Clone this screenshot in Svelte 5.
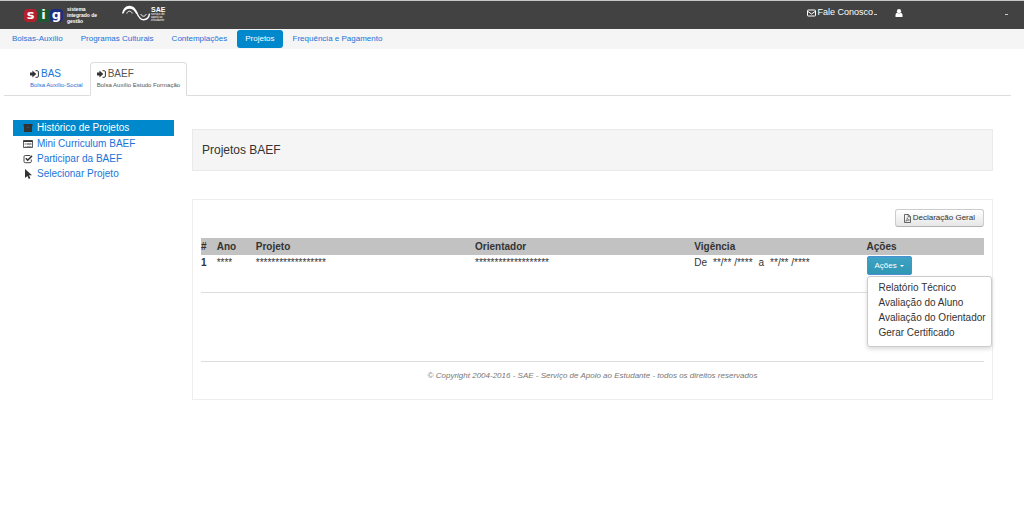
<script lang="ts">
	type Project = {
		id: number;
		year: string;
		title: string;
		advisor: string;
		start: string;
		end: string;
	};

	const sections = [
		'Bolsas-Auxílio',
		'Programas Culturais',
		'Contemplações',
		'Projetos',
		'Frequência e Pagamento'
	];

	const tabs = [
		{ name: 'BAS', detail: 'Bolsa Auxílio-Social' },
		{ name: 'BAEF', detail: 'Bolsa Auxílio Estudo Formação' }
	];

	const sideItems = [
		{ icon: 'archive', label: 'Histórico de Projetos' },
		{ icon: 'list', label: 'Mini Curriculum BAEF' },
		{ icon: 'check', label: 'Participar da BAEF' },
		{ icon: 'pointer', label: 'Selecionar Projeto' }
	];

	const projects: Project[] = [
		{
			id: 1,
			year: '****',
			title: '******************',
			advisor: '*******************',
			start: '**/** /****',
			end: '**/** /****'
		}
	];

	const actions = [
		'Relatório Técnico',
		'Avaliação do Aluno',
		'Avaliação do Orientador',
		'Gerar Certificado'
	];

	let section = $state('Projetos');
	let tab = $state('BAEF');
	let sideItem = $state('Histórico de Projetos');
	let openMenu = $state<number | null>(1);

	function toggleMenu(id: number) {
		openMenu = openMenu === id ? null : id;
	}
</script>

<svelte:head>
	<title>Projetos BAEF</title>
</svelte:head>

<header class="topbar">
	<a class="logo" href="#sig" aria-label="sig">
		<span class="sig">
			<span class="letter red">s</span>
			<span class="letter green">i</span>
			<span class="letter blue">g</span>
		</span>
		<span class="tagline">sistema<br />integrado de<br />gestão</span>
	</a>
	<a class="logo sae" href="#sae">
		<svg width="29" height="17" viewBox="0 0 29 17" fill="none" stroke="#fff">
			<path d="M0 8.500C1 3.500 4 .8 7.500.8c4.500 0 6.500 3.700 8.300 7.200L14.300 9C12.300 5.500 10.500 3.800 7.500 3.800 4.500 3.800 2.500 5.500 1.500 8.500z" fill="#fff" stroke="none" />
			<path d="M4.800 8.500c.5-1.600 1.400-2.300 2.700-2.300s2.200.7 2.700 2.300" />
			<path d="M14.800 8c1.700 3.800 3.200 6.700 6.700 6.700 3.300 0 5.500-2.200 6-6" stroke-width="1.400" />
			<path d="M18.800 9c.5 1.500 1.400 2.200 2.700 2.200s2.200-.7 2.700-2.200" stroke-width=".9" />
		</svg>
		<span class="sae-text"><b>SAE</b>serviço de<br />apoio ao<br />estudante</span>
	</a>
	<div class="account">
		<button class="bar-button" type="button">
			<svg width="9" height="8" viewBox="0 0 9 8" fill="none" stroke="#fff">
				<rect x=".5" y="1" width="8" height="6" rx=".6" />
				<path d="M1 2.500l3.500 2.500L8 2.500" />
			</svg>
			Fale Conosco
			<span class="dash"></span>
		</button>
		<button class="bar-button user" type="button" aria-label="Usuário">
			<svg width="8" height="8" viewBox="0 0 8 8" fill="#fff">
				<circle cx="4" cy="2.200" r="2.100" />
				<path d="M.5 8V6.300C.5 4.800 1.300 4 2.300 3.800c1 .8 2.400.8 3.400 0 1 .2 1.800 1 1.800 2.500V8z" />
			</svg>
			<span class="dash"></span>
		</button>
	</div>
</header>

<nav class="sections">
	{#each sections as name}
		<a href="#{name}" class:active={section === name} onclick={() => (section = name)}>{name}</a>
	{/each}
</nav>

<nav class="tabs">
	{#each tabs as item}
		<a href="#{item.name}" class:active={tab === item.name} onclick={() => (tab = item.name)}>
			<span class="tab-name">
				<svg width="9" height="8" viewBox="0 0 9 8">
					<path d="M0 2.500h2.400V.4L6.300 4 2.400 7.600V5.500H0z" fill="#333" />
					<path d="M5.500.7h1.700c.8 0 1.200.4 1.200 1.200v4.200c0 .8-.4 1.200-1.200 1.200H5.500" fill="none" stroke="#333" stroke-width="1" />
				</svg>
				{item.name}
			</span>
			<small>{item.detail}</small>
		</a>
	{/each}
</nav>

<div class="layout">
	<nav class="side">
		{#each sideItems as item}
			<a href="#{item.icon}" class:active={sideItem === item.label} onclick={() => (sideItem = item.label)}>
				<svg width="10" height="10" viewBox="0 0 10 10" fill="#333">
					{#if item.icon === 'archive'}
						<path d="M.5 1h9v2.300h-9zM1 3.300h8V9H1z" />
						<path d="M3.800 4.500h2.400" stroke="#2a6a8c" stroke-width=".6" />
					{:else if item.icon === 'list'}
						<path d="M.5 1.500h9v7h-9z" fill="none" stroke="#333" stroke-width=".8" />
						<path d="M.5 1.500h9v1.500h-9zM1.700 4h1v.6h-1zM3.500 4h5v.6h-5zM1.700 5.500h1v.6h-1zM3.500 5.500h5v.6h-5zM1.700 7h1v.6h-1zM3.500 7h5v.6h-5z" />
					{:else if item.icon === 'check'}
						<path d="M8.300 5.500v2c0 .7-.5 1.200-1.200 1.200H2.200C1.500 8.700 1 8.200 1 7.500V2.700c0-.7.500-1.200 1.200-1.200h5" fill="none" stroke="#333" stroke-width=".9" />
						<path d="M2.800 4.200L4.700 6.200 9 1.900" fill="none" stroke="#333" stroke-width="1.500" />
					{:else}
						<path d="M2 0l7 6.300H6l1.400 3-1.600.7L4.400 7 2 9z" />
					{/if}
				</svg>
				{item.label}
			</a>
		{/each}
	</nav>

	<main>
		<h1>Projetos BAEF</h1>

		<section class="panel">
			<div class="toolbar">
				<button class="report" type="button">
					<svg width="7" height="9" viewBox="0 0 7 9" fill="none" stroke="#444" stroke-width=".8">
						<path d="M.5.5h3.800l2.200 2.200v5.800h-6zM4.200.5v2.300h2.300" />
						<path d="M1.700 7.200C3 6 3.300 4.800 3.200 3.700c.3 1.500 1 2.300 2.300 2.400-1.400 0-2.500.3-3.800 1.100z" stroke-width=".6" />
					</svg>
					Declaração Geral
				</button>
			</div>

			<table>
				<thead>
					<tr>
						<th class="col-id">#</th>
						<th class="col-year">Ano</th>
						<th class="col-title">Projeto</th>
						<th class="col-title">Orientador</th>
						<th class="col-term">Vigência</th>
						<th>Ações</th>
					</tr>
				</thead>
				<tbody>
					{#each projects as project}
						<tr>
							<td><b>{project.id}</b></td>
							<td>{project.year}</td>
							<td>{project.title}</td>
							<td>{project.advisor}</td>
							<td class="term"><span>De</span><span>{project.start}</span><span>a</span><span>{project.end}</span></td>
							<td>
								<div class="dropdown">
									<button class="action" type="button" aria-expanded={openMenu === project.id} onclick={() => toggleMenu(project.id)}>
										Ações <span class="caret"></span>
									</button>
									{#if openMenu === project.id}
										<ul class="menu">
											{#each actions as action}
												<li><a href="#acao">{action}</a></li>
											{/each}
										</ul>
									{/if}
								</div>
							</td>
						</tr>
					{/each}
				</tbody>
			</table>

			<footer>© Copyright 2004-2016 - SAE - Serviço de Apoio ao Estudante - todos os direitos reservados</footer>
		</section>
	</main>
</div>

<style>
	:global(body) {
		background: #fff;
		color: #333;
		font: 10px/15px "Liberation Sans", Arial, sans-serif;
	}

	a {
		color: #1a73d9;
		text-decoration: none;
	}

	button {
		font-family: inherit;
		cursor: pointer;
	}

	svg {
		flex: none;
	}

	.topbar {
		display: flex;
		align-items: flex-start;
		height: 28px;
		padding: 0 16px 0 24px;
		border-top: 1px solid #c4c8c6;
		background: #424242;
	}

	.logo {
		display: flex;
		align-items: center;
		gap: 4px;
		padding-top: 5px;
		color: #fff;
	}

	.sig {
		display: flex;
	}

	.letter {
		width: 13px;
		height: 13px;
		border-radius: 4px;
		font: bold 13px/12px "DejaVu Sans", sans-serif;
		text-align: center;
	}

	.red {
		background: #b3202e;
	}

	.green {
		background: #1d5a33;
	}

	.blue {
		background: #1c2f80;
	}

	.tagline {
		font-size: 5px;
		font-weight: bold;
		line-height: 6px;
	}

	.sae {
		gap: 0;
		margin-left: 25px;
		padding-top: 4px;
	}

	.sae-text {
		font-size: 3px;
		line-height: 3px;
	}

	.sae-text b {
		display: block;
		font-size: 7px;
		line-height: 7px;
	}

	.account {
		display: flex;
		flex: 1;
		justify-content: flex-end;
		padding-top: 5px;
	}

	.bar-button {
		display: flex;
		align-items: center;
		gap: 1px;
		padding: 0;
		border: 0;
		background: none;
		color: #fff;
		font-size: 9px;
		line-height: 13px;
	}

	.user {
		justify-content: space-between;
		width: 113px;
		margin-left: 18px;
	}

	.dash {
		width: 3px;
		height: 1px;
		margin-top: 3px;
		background: #ccc;
	}

	.sections {
		display: flex;
		gap: 2px;
		padding: 1px 4px;
		background: #f5f5f5;
	}

	.sections a {
		padding: 0 8px;
		border-radius: 3px;
		font-size: 8px;
		line-height: 18px;
	}

	.sections .active {
		background: #08c;
		color: #fff;
	}

	.tabs {
		display: flex;
		margin: 13px 13px 0 4px;
		padding-left: 19px;
		border-bottom: 1px solid #ddd;
	}

	.tabs a {
		margin-bottom: -1px;
		padding: 4px 6px;
		border: 1px solid transparent;
		border-radius: 4px 4px 0 0;
	}

	.tabs .active {
		border-color: #ddd;
		border-bottom-color: #fff;
		background: #fff;
		color: #555;
	}

	.tab-name {
		display: flex;
		align-items: center;
		gap: 2px;
		font-size: 10px;
		line-height: 13px;
	}

	small {
		display: block;
		font-size: 6px;
		line-height: 11px;
	}

	.layout {
		display: flex;
		align-items: flex-start;
		gap: 18px;
		padding: 24px 31px 0 13px;
	}

	.side {
		flex: 0 0 161px;
	}

	.side a {
		display: flex;
		align-items: center;
		gap: 4px;
		padding-left: 10px;
	}

	.side .active {
		padding-bottom: 1px;
		background: #08c;
		color: #fff;
	}

	main {
		flex: 1;
		padding-top: 9px;
	}

	h1 {
		margin: 0 0 28px;
		padding: 12px 9px;
		border: 1px solid #eaeaea;
		background: #f5f5f5;
		font-size: 12px;
		font-weight: normal;
		line-height: 16px;
	}

	.panel {
		padding: 9px 8px 16px;
		border: 1px solid #eee;
	}

	.toolbar {
		display: flex;
		justify-content: flex-end;
		margin-bottom: 11px;
	}

	.report {
		display: flex;
		align-items: center;
		gap: 2px;
		padding: 0 8px;
		border: 1px solid #ccc;
		border-bottom-color: #b3b3b3;
		border-radius: 3px;
		background: linear-gradient(#fff, #e6e6e6);
		color: #333;
		font-size: 8px;
		line-height: 16px;
	}

	table {
		width: 100%;
		border-collapse: collapse;
		border-bottom: 1px solid #ddd;
		table-layout: fixed;
	}

	th {
		padding: 1px 0;
		background: #c2c2c2;
		text-align: left;
	}

	.col-id {
		width: 2%;
	}

	.col-year {
		width: 5%;
	}

	.col-title {
		width: 28%;
	}

	.col-term {
		width: 22%;
	}

	td {
		height: 37px;
		padding: 0;
		vertical-align: top;
	}

	.term span {
		margin-right: 6px;
	}

	.dropdown {
		position: relative;
		padding-top: 1px;
	}

	.action {
		display: flex;
		align-items: center;
		gap: 3px;
		padding: 0 7px;
		border: 1px solid #4a90d9;
		border-radius: 2px;
		background: linear-gradient(#3fa3c4, #2f96b4);
		color: #fff;
		font-size: 8px;
		line-height: 17px;
	}

	.caret {
		border: 2px solid transparent;
		border-top-color: #fff;
		border-bottom: 0;
	}

	.menu {
		position: absolute;
		top: 21px;
		left: 0;
		margin: 0;
		padding: 3px 0 6px;
		border: 1px solid #ccc;
		border-radius: 3px;
		background: #fff;
		box-shadow: 0 2px 4px rgba(0, 0, 0, 0.15);
		list-style: none;
		white-space: nowrap;
	}

	.menu a {
		display: block;
		padding: 0 5px 0 11px;
		color: #333;
	}

	footer {
		margin-top: 68px;
		padding-top: 6px;
		border-top: 1px solid #ddd;
		color: #777;
		font-size: 8px;
		font-style: italic;
		text-align: center;
	}
</style>
